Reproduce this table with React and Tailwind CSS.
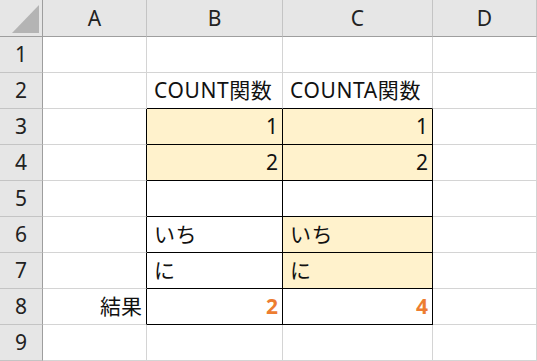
const COLS = ["A", "B", "C", "D"];

// sheet contents: [row][col] -> { v, align, fill, bold }
const CELLS = {
  2: { 1: { v: "COUNT関数" }, 2: { v: "COUNTA関数" } },
  3: { 1: { v: "1", align: "right", fill: true }, 2: { v: "1", align: "right", fill: true } },
  4: { 1: { v: "2", align: "right", fill: true }, 2: { v: "2", align: "right", fill: true } },
  6: { 1: { v: "いち" }, 2: { v: "いち", fill: true } },
  7: { 1: { v: "に" }, 2: { v: "に", fill: true } },
  8: {
    0: { v: "結果", align: "right" },
    1: { v: "2", align: "right", bold: true },
    2: { v: "4", align: "right", bold: true },
  },
};

// bordered block B3:C8
const inTable = (r, c) => r >= 3 && r <= 8 && (c === 1 || c === 2);

function Cell({ r, c }) {
  const cell = CELLS[r]?.[c];
  const right = cell?.align === "right";
  const blackRight = inTable(r, c) || inTable(r, c + 1);
  const blackBottom = inTable(r, c) || inTable(r + 1, c);
  const fill = cell?.fill ? "bg-[#fff2cc]" : "bg-white";
  const align = right ? "justify-end pr-[4px]" : "justify-start pl-[7px]";

  return (
    <div
      className={`h-[36px] flex items-center border-r border-b ${fill} ${align} ${
        blackRight ? "border-r-black" : "border-r-[#d4d4d4]"
      } ${blackBottom ? "border-b-black" : "border-b-[#d4d4d4]"}`}
    >
      {cell && (
        <span
          className={`whitespace-nowrap text-[21px] leading-none ${
            cell.bold ? "font-bold text-[#ed7d31]" : "text-[#111]"
          } ${right ? "" : "tracking-[0.6px]"}`}
        >
          {cell.v}
        </span>
      )}
    </div>
  );
}

export default function App() {
  const rows = [1, 2, 3, 4, 5, 6, 7, 8, 9];

  return (
    <div
      className="w-[537px] h-[361px] overflow-hidden bg-white"
      style={{ fontFamily: "'Noto Sans', 'Noto Sans CJK JP', sans-serif" }}
    >
      <div className="grid grid-cols-[43px_104px_136px_150px_1fr]">
        {/* corner */}
        <div className="h-[37px] bg-[#e6e6e6] border-r border-b border-[#9e9e9e] relative">
          <svg width="42" height="36" className="absolute left-0 top-0">
            <polygon points="39,5 39,33 12,33" fill="#b4b4b4" />
          </svg>
        </div>

        {/* column headers */}
        {COLS.map((col) => (
          <div
            key={col}
            className="h-[37px] bg-[#e6e6e6] border-r border-r-[#c4c4c4] border-b border-b-[#9e9e9e] flex items-center justify-center text-[21px] leading-none text-[#222]"
          >
            {col}
          </div>
        ))}

        {rows.map((r) => (
          <div key={r} className="contents">
            <div className="h-[36px] bg-[#e6e6e6] border-r border-r-[#9e9e9e] border-b border-b-[#c4c4c4] flex items-center justify-center text-[21px] leading-none text-[#222]">
              {r}
            </div>
            {COLS.map((_, c) => (
              <Cell key={c} r={r} c={c} />
            ))}
          </div>
        ))}
      </div>
    </div>
  );
}
